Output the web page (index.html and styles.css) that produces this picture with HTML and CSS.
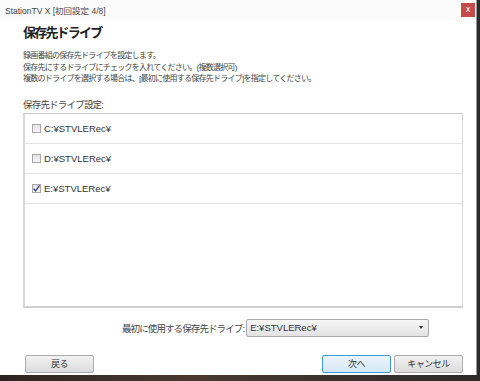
FILE: index.html
```html
<!DOCTYPE html>
<html>

<head>
  <title>StationTV X [初回設定 4/8]</title>
  <link rel="stylesheet" href="styles.css">
</head>

<body>
  <main class="desktop">
    <div class="window">
      <div class="title-bar">
        <div class="title-text">StationTV X [初回設定 4/8]</div>
        <button class="close-btn">x</button>
      </div>
      <div class="content">
        <div class="page-title">保存先ドライブ</div>
        <div class="description">
          <div>録画番組の保存先ドライブを設定します。</div>
          <div>保存先にするドライブにチェックを入れてください。(複数選択可)</div>
          <div>複数のドライブを選択する場合は、[最初に使用する保存先ドライブ]を指定してください。</div>
        </div>
        <div class="list-label">保存先ドライブ設定:</div>
        <div class="drive-list">
          <label class="drive-row">
            <span class="check-box"></span>
            <span class="drive-name">C:¥STVLERec¥</span>
          </label>
          <label class="drive-row">
            <span class="check-box"></span>
            <span class="drive-name">D:¥STVLERec¥</span>
          </label>
          <label class="drive-row">
            <span class="check-box checked">
              <svg width="9" height="9" viewBox="0 0 9 9">
                <path d="M1.6 4.6 L3.6 7 L7.6 1.4" fill="none" stroke="#3b3f8a" stroke-width="1.3" />
              </svg>
            </span>
            <span class="drive-name">E:¥STVLERec¥</span>
          </label>
        </div>
        <div class="first-drive">
          <span class="first-label">最初に使用する保存先ドライブ:</span>
          <div class="combo">
            <span>E:¥STVLERec¥</span>
            <span class="combo-arrow"></span>
          </div>
        </div>
        <div class="buttons">
          <button class="btn">戻る</button>
          <div class="btn-group">
            <button class="btn btn-default">次へ</button>
            <button class="btn">キャンセル</button>
          </div>
        </div>
      </div>
    </div>
  </main>
</body>

</html>
```

FILE: styles.css
```css
body {
  margin: 0;
  font-family: "Liberation Sans", "Noto Sans CJK JP", sans-serif;
  color: #333;
}

.desktop {
  width: 480px;
  height: 381px;
  background: linear-gradient(90deg, #2a2420, #4a3a30 40%, #2c2a2a);
  overflow: hidden;
}

.window {
  width: 476px;
  height: 375px;
  background-color: white;
  border-right: 1px solid #9a9a9a;
  display: flex;
  flex-direction: column;
}

.title-bar {
  height: 19px;
  display: flex;
  align-items: center;
  justify-content: space-between;
  padding-left: 5px;
  background-color: #fbfbfb;
}

.title-text {
  font-size: 8.5px;
  color: #444;
}

.close-btn {
  width: 14px;
  height: 14px;
  margin-right: 1px;
  margin-top: 1px;
  border: none;
  padding: 0;
  background-color: #c74a4a;
  color: white;
  font-size: 8px;
  line-height: 12px;
  font-family: "DejaVu Sans", sans-serif;
}

.content {
  flex: 1;
  display: flex;
  flex-direction: column;
  padding: 0 13px 0 23px;
}

.page-title {
  margin-top: 4px;
  font-size: 13px;
  letter-spacing: -1.8px;
  font-weight: bold;
  color: #222;
  line-height: 20px;
}

.description {
  margin-top: 7px;
  font-size: 8px;
  letter-spacing: -0.75px;
  line-height: 11.5px;
  color: #444;
}

.list-label {
  margin-top: 14px;
  font-size: 9.5px;
  letter-spacing: -0.8px;
  line-height: 12px;
  color: #444;
}

.drive-list {
  margin-top: 2px;
  height: 195px;
  box-sizing: border-box;
  border: 1px solid #c8c8c8;
  border-right-color: #d8d8d8;
  border-bottom: 2px solid #d0d0d0;
  border-left: 2px solid #d8d8d8;
  display: flex;
  flex-direction: column;
}

.drive-row {
  height: 29px;
  border-bottom: 1px solid #e4e4e4;
  display: flex;
  align-items: center;
  padding-left: 7px;
  gap: 3px;
}

.check-box {
  width: 7px;
  height: 7px;
  border: 1px solid #a8a8a8;
  background: linear-gradient(#e2e2e2, #f8f8f8);
  display: flex;
}

.check-box.checked svg {
  margin: -1px;
}

.drive-name {
  font-size: 9.5px;
  color: #333;
}

.first-drive {
  margin-top: 11px;
  display: flex;
  align-items: center;
  gap: 2px;
  padding-left: 99px;
}

.first-label {
  font-size: 9.5px;
  letter-spacing: -0.9px;
  color: #444;
}

.combo {
  width: 183px;
  height: 18px;
  box-sizing: border-box;
  border: 1px solid #a8a8a8;
  border-radius: 2px;
  background: linear-gradient(#f6f6f6, #e2e2e2);
  display: flex;
  align-items: center;
  justify-content: space-between;
  padding-left: 3px;
  font-size: 9.5px;
  color: #333;
}

.combo-arrow {
  width: 0;
  height: 0;
  margin-right: 5px;
  border-left: 2.5px solid transparent;
  border-right: 2.5px solid transparent;
  border-top: 3px solid #333;
}

.buttons {
  margin-top: 18px;
  display: flex;
  justify-content: space-between;
  padding-left: 2px;
}

.btn-group {
  display: flex;
  gap: 3px;
}

.btn {
  width: 69px;
  height: 18px;
  padding: 0;
  border: 1px solid #acacac;
  border-radius: 2px;
  background: linear-gradient(#f2f2f2, #dcdcdc);
  font-family: "Noto Sans CJK JP", sans-serif;
  font-size: 9px;
  letter-spacing: -0.5px;
  color: #333;
}

.btn-default {
  border-color: #3c9bd6;
  background: linear-gradient(#eaf4fb, #d6e8f5);
}
```
